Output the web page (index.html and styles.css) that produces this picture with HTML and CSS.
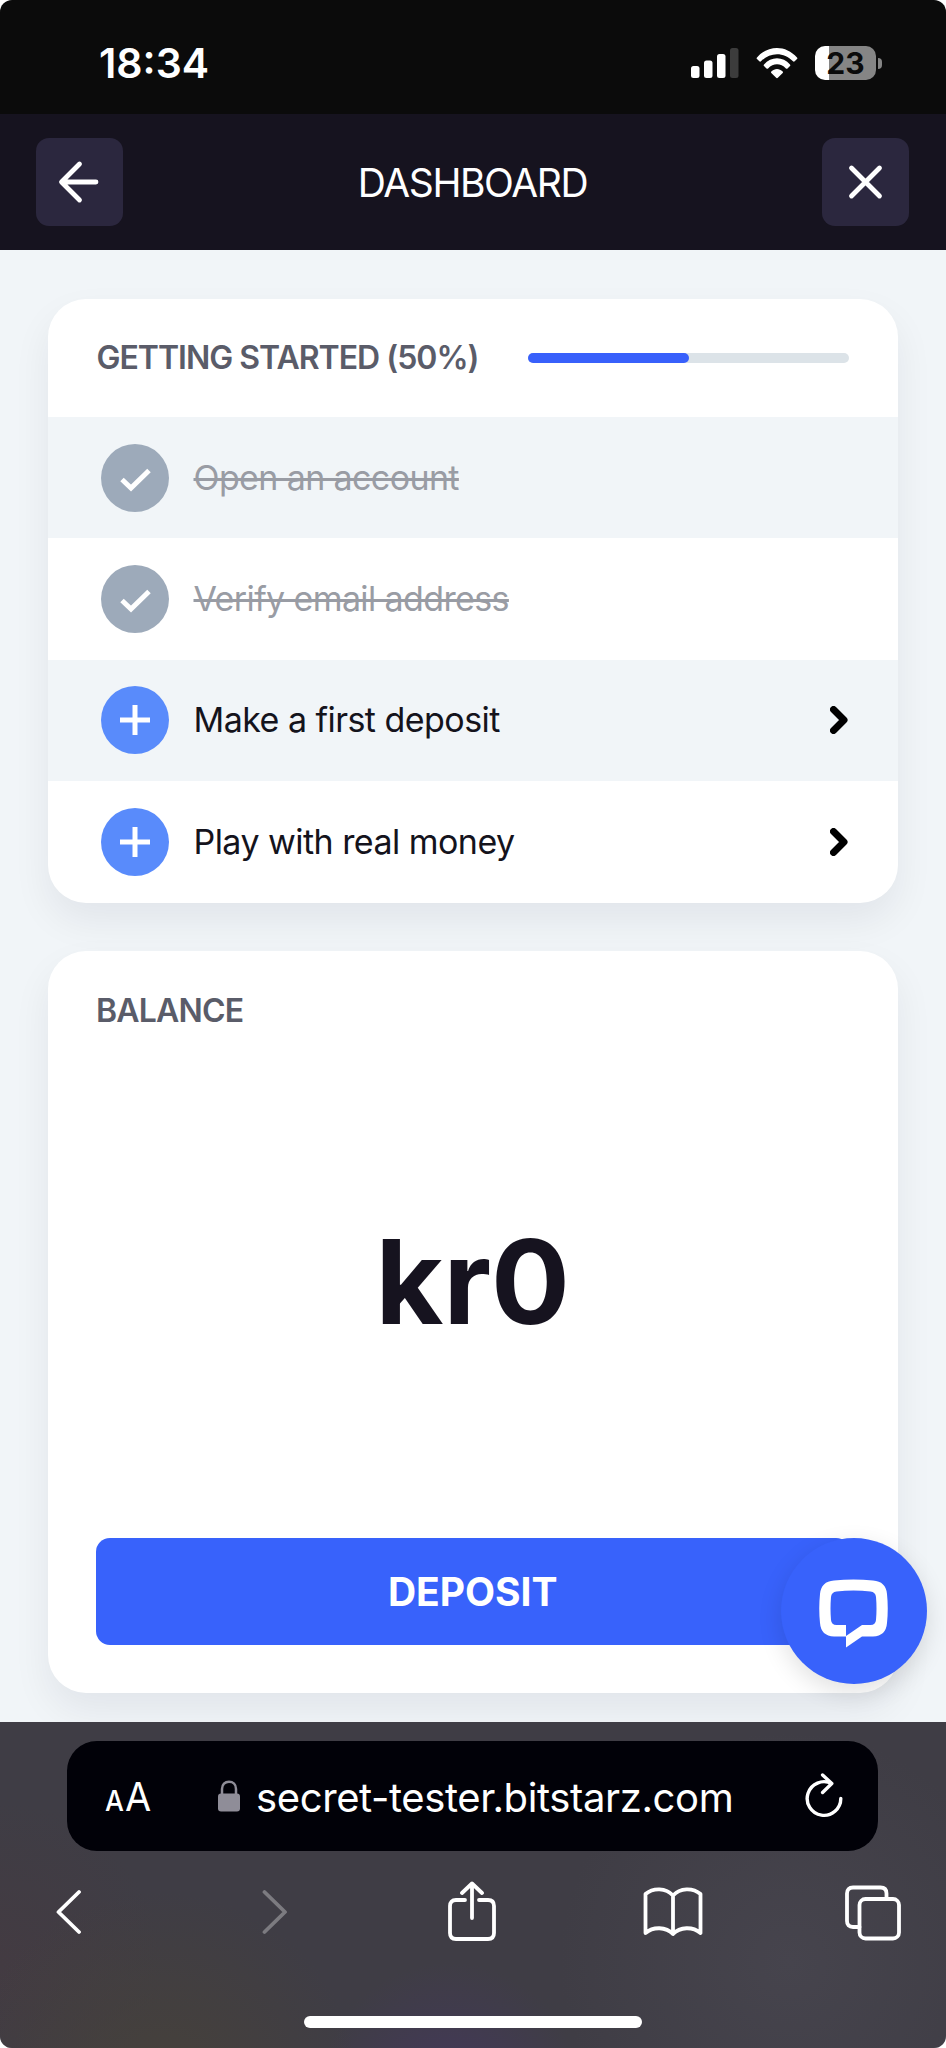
FILE: index.html
```html
<!DOCTYPE html>
<html lang="en">
<head>
<meta charset="utf-8">
<title>Dashboard</title>
<link rel="stylesheet" href="styles.css">
</head>
<body>
<div class="screen">
  <div class="status">
    <span class="clock">18:34</span>
    <div class="indicators">
      <svg class="signal" width="48" height="32" viewBox="0 0 48 32"><g fill="#fff"><rect x="0" y="19" width="8.5" height="12" rx="2.5"/><rect x="13" y="13.500" width="8.500" height="17.500" rx="2.500"/><rect x="26" y="7" width="8.500" height="24" rx="2.500"/></g><rect x="39" y="1" width="8.500" height="30" rx="2.500" fill="#3c3c3c"/></svg>
      <svg class="wifi" width="42" height="32" viewBox="0 0 42 32" fill="#fff"><path d="M1 10.500C12-2.300 30-2.300 41 10.500c.6.700.5 1.100 0 1.600l-2.300 2.200c-.6.600-1.200.5-1.700 0C28 4.800 14 4.800 5 14.300c-.5.500-1.100.6-1.700 0L1 12.100c-.5-.5-.6-.9 0-1.600z"/><path d="M8 17.500c7-8.300 19-8.300 26 0 .5.600.4 1.100 0 1.500l-2.500 2.400c-.6.500-1.100.5-1.600 0-5.200-5.400-12.600-5.400-17.800 0-.5.500-1 .5-1.600 0L8 19c-.4-.4-.5-.9 0-1.500z"/><path d="M15.300 24.600c3.300-3.500 8.100-3.500 11.400 0 .5.500.5.900 0 1.400l-4.600 4.600c-.8.700-1.400.7-2.200 0L15.300 26c-.5-.5-.5-.9 0-1.400z"/></svg>
      <div class="battery"><span class="battery-body">23</span><span class="battery-cap"></span></div>
    </div>
  </div>
  <header class="topbar">
    <button class="square" aria-label="Back"><svg width="48" height="48" viewBox="0 0 48 48"><path d="M39 24H6M22.500 6 4.500 24l18 18" transform="translate(2 0)"/></svg></button>
    <h1 class="title">DASHBOARD</h1>
    <button class="square" aria-label="Close"><svg width="48" height="48" viewBox="0 0 48 48"><path d="M9.500 10l28 28M37.500 10 9.500 38"/></svg></button>
  </header>
  <main class="page">
    <section class="card">
      <div class="card-head"><h2 class="label started">GETTING STARTED (50%)</h2><div class="track"><div class="fill" style="width:50%"></div></div></div>
      <ul class="steps">
        <li class="step done"><span class="dot"><svg width="34" height="34" viewBox="0 0 34 34"><path d="M4 18.500 13 27 31 9.500"/></svg></span><span class="step-text">Open an account</span></li>
        <li class="step done"><span class="dot"><svg width="34" height="34" viewBox="0 0 34 34"><path d="M4 18.500 13 27 31 9.500"/></svg></span><span class="step-text">Verify email address</span></li>
        <li class="step"><span class="dot"><svg width="34" height="34" viewBox="0 0 34 34"><path d="M17 2v30M2 17h30"/></svg></span><span class="step-text">Make a first deposit</span><svg class="go" width="18" height="28" viewBox="0 0 18 28"><path d="M3.500 3.500 14 14 3.500 24.500"/></svg></li>
        <li class="step"><span class="dot"><svg width="34" height="34" viewBox="0 0 34 34"><path d="M17 2v30M2 17h30"/></svg></span><span class="step-text">Play with real money</span><svg class="go" width="18" height="28" viewBox="0 0 18 28"><path d="M3.500 3.500 14 14 3.500 24.500"/></svg></li>
      </ul>
    </section>
    <section class="card balance">
      <h2 class="label bal">BALANCE</h2>
      <p class="amount">kr0</p>
      <button class="deposit">DEPOSIT</button>
    </section>
    <button class="chat" aria-label="Chat"><svg width="70" height="70" viewBox="0 0 70 70"><path fill="#fff" fill-rule="evenodd" d="M15 1.500Q34.500-.5 54 1.500Q67 2.500 68 15Q69.500 29.500 68 44Q67 57 54 57.500H43L27 68.500V57.500H15Q2 57 1 44Q-.5 29.500 1 15Q2 2.500 15 1.500zM17.500 12.500Q12.500 13 12 18Q11 29.500 12 41Q12.500 46 17.500 46H27V57L43 46H51.500Q56.500 46 57 41Q58 29.500 57 18Q56.500 13 51.500 12.500Q34.500 10.500 17.500 12.500z"/></svg></button>
  </main>
  <footer class="browser">
    <div class="url-bar">
      <span class="text-size"><span class="small-a">A</span><span class="big-a">A</span></span>
      <svg class="lock" width="22" height="32" viewBox="0 0 22 32"><rect y="13.500" width="22" height="18" rx="3" fill="#8f8d98"/><path d="M4 15V9c0-4.500 3-7.200 7-7.200S18 4.500 18 9v6" fill="none" stroke="#8f8d98" stroke-width="2.500"/></svg>
      <span class="url">secret-tester.bitstarz.com</span>
      <svg class="reload" width="40" height="46" viewBox="0 0 40 46"><path d="M27.500 10.500A16.800 16.800 0 1 0 36.800 25.500M18.600 2 27.800 10.500 18.600 19.500"/></svg>
    </div>
    <nav class="tools">
      <svg class="i-back" width="26" height="46" viewBox="0 0 26 46"><path d="M24 3 3.500 23 24 43"/></svg>
      <svg class="i-fwd" width="26" height="46" viewBox="0 0 26 46"><path d="M2.500 3 23 23 2.500 43"/></svg>
      <svg class="i-share" width="48" height="60" viewBox="0 0 48 60"><path d="M17 19H8q-6 0-6 6v27q0 6 6 6h32q6 0 6-6V25q0-6-6-6h-9M24 37V2.500M14 12 24 2.500 34 12"/></svg>
      <svg class="i-book" width="60" height="50" viewBox="0 0 60 50"><path d="M30 8.500C23 .5 10 .5 2.500 7v39C10 39.500 23 39.500 30 47c7-7.500 20-7.500 27.500-1V7C50 .5 37 .5 30 8.500zM30 8.500V47"/></svg>
      <svg class="i-tabs" width="56" height="56" viewBox="0 0 56 56"><rect x="14.500" y="14" width="39.500" height="39.500" rx="6"/><path d="M14.500 42H8q-6 0-6-6V8.500q0-6 6-6h27.500q6 0 6 6V14"/></svg>
    </nav>
    <div class="home"></div>
  </footer>
</div>
</body>
</html>
```
FILE: styles.css
```css
* { box-sizing: border-box; }
body { margin: 0; background: #fff; font-family: Inter, "Liberation Sans", sans-serif; }
h1, h2, p, ul { margin: 0; padding: 0; }
button { border: 0; padding: 0; font-family: inherit; color: inherit; }
svg { display: block; flex: none; }
span, h1, h2, p { white-space: nowrap; }

.screen { width: 946px; height: 2048px; display: flex; flex-direction: column; overflow: hidden; border-radius: 12px; background: #f1f5f8; }

.status { height: 114px; flex: none; background: #0b0b0b; color: #fff; display: flex; justify-content: space-between; padding: 38px 64px 0 99px; }
.clock { font-size: 41px; line-height: 50px; font-weight: 600; }
.indicators { display: flex; align-items: flex-start; padding-top: 8px; }
.signal { margin: 1px 17px 0 0; }
.wifi { margin: 1px 17px 0 0; }
.battery { display: flex; align-items: center; gap: 2px; }
.battery-body { width: 61px; height: 34px; border-radius: 10px; background: linear-gradient(90deg, #fff 14px, #858585 14px); color: #0b0b0b; font-size: 30px; font-weight: 700; line-height: 34px; text-align: center; }
.battery-cap { width: 4px; height: 11px; border-radius: 0 5px 5px 0; background: #858585; }

.topbar { height: 136px; flex: none; background: #16131f; color: #fff; display: flex; align-items: center; justify-content: space-between; padding: 0 36.500px 0 35.500px; }
.square { width: 87.500px; height: 88px; border-radius: 13px; background: #2b273e; display: grid; place-items: center; }
.square svg { fill: none; stroke: #fff; stroke-width: 4.8; stroke-linecap: round; stroke-linejoin: round; }
.title { font-size: 39px; font-weight: 400; letter-spacing: -1.400px; }

.page { position: relative; flex: 1; padding: 48.500px 48px 0; display: flex; flex-direction: column; gap: 48px; overflow: hidden; }
.card { width: 849.500px; background: #fff; border-radius: 38px; flex: none; box-shadow: 0 18px 38px rgba(22, 19, 51, 0.065); }
.card-head { height: 118.500px; display: flex; align-items: center; justify-content: space-between; padding: 0 48.500px; }
.label { font-size: 32px; line-height: 40px; font-weight: 600; color: #5a5c69; }
.started { letter-spacing: -1px; }
.bal { letter-spacing: -0.8px; }
.track { width: 321px; height: 10px; border-radius: 5px; background: #dce3e8; }
.fill { height: 10px; border-radius: 5px; background: #3860fb; }
.steps { list-style: none; }
.step { height: 121.400px; display: flex; align-items: center; padding: 0 50px 0 53px; color: #14131c; }
.step:nth-child(odd) { background: #f1f5f8; }
.dot { width: 68px; height: 68px; border-radius: 50%; background: #598bfb; display: grid; place-items: center; margin-right: 24.500px; flex: none; }
.dot svg { fill: none; stroke: #fff; stroke-width: 5; }
.done .dot { background: #9daaba; }
.step-text { font-size: 34px; line-height: 44px; font-weight: 400; letter-spacing: -0.54px; }
.done .step-text { color: #999ca4; text-decoration: line-through; text-decoration-thickness: 2.5px; letter-spacing: -0.62px; }
.go { margin-left: auto; fill: none; stroke: #000; stroke-width: 7; stroke-linecap: round; stroke-linejoin: round; }

.balance { height: 742.500px; padding: 40px 48px 48.500px; display: flex; flex-direction: column; justify-content: space-between; }
.amount { font-size: 117px; line-height: 140px; padding-bottom: 4px; font-weight: 700; text-align: center; color: #16131f; }
.deposit { height: 107px; border-radius: 14px; background: #3862fb; color: #fff; font-size: 39px; font-weight: 700; }
.chat { position: absolute; right: 19px; top: 1288px; width: 146px; height: 146px; border-radius: 50%; background: #3862fb; display: grid; place-items: center; padding-top: 5px; box-shadow: 0 8px 24px rgba(0, 0, 0, 0.12); }

.browser { height: 326px; flex: none; padding-top: 19px; display: flex; flex-direction: column; align-items: center; color: #fff; background: radial-gradient(circle at 160px 370px, #46413a, rgba(70, 65, 58, 0) 200px), radial-gradient(circle at 450px 370px, #43385a, rgba(67, 56, 90, 0) 130px), radial-gradient(circle at 0 240px, #433b42, rgba(67, 59, 66, 0) 160px), radial-gradient(circle at 790px 240px, #46444d, rgba(70, 68, 77, 0) 230px), #3f3d45; }
.url-bar { width: 811px; height: 110px; margin-right: 1px; border-radius: 30px; background: #010108; display: flex; align-items: center; padding: 0 34px 0 38px; }
.text-size { width: 48px; display: flex; align-items: baseline; line-height: 50px; padding-top: 5px; gap: 2px; }
.small-a { width: 18px; font-size: 29px; font-weight: 500; transform: scaleX(0.92); transform-origin: left; }
.big-a { font-size: 40px; transform: scaleX(0.95); transform-origin: left; }
.lock { margin-left: 65px; }
.url { font-size: 40px; margin: 2px 0 0 16px; letter-spacing: -0.38px; }
.reload { margin-left: auto; fill: none; stroke: #fff; stroke-width: 3.400; stroke-linecap: round; stroke-linejoin: round; }
.tools { width: 100%; padding: 30px 46px 0 55px; display: flex; align-items: flex-start; }
.tools svg { fill: none; stroke: #fff; stroke-width: 3.800; stroke-linecap: round; stroke-linejoin: round; }
.i-back { margin-top: 8px; }
.tools .i-fwd { margin: 8px 0 0 181px; stroke: #7c7b80; }
.i-share { margin-left: 160px; }
.i-book { margin: 6px 0 0 147px; }
.i-tabs { margin: 4px 0 0 142px; }
.home { width: 338px; height: 12px; border-radius: 6px; background: #fff; margin: auto 0 20px; }
```
